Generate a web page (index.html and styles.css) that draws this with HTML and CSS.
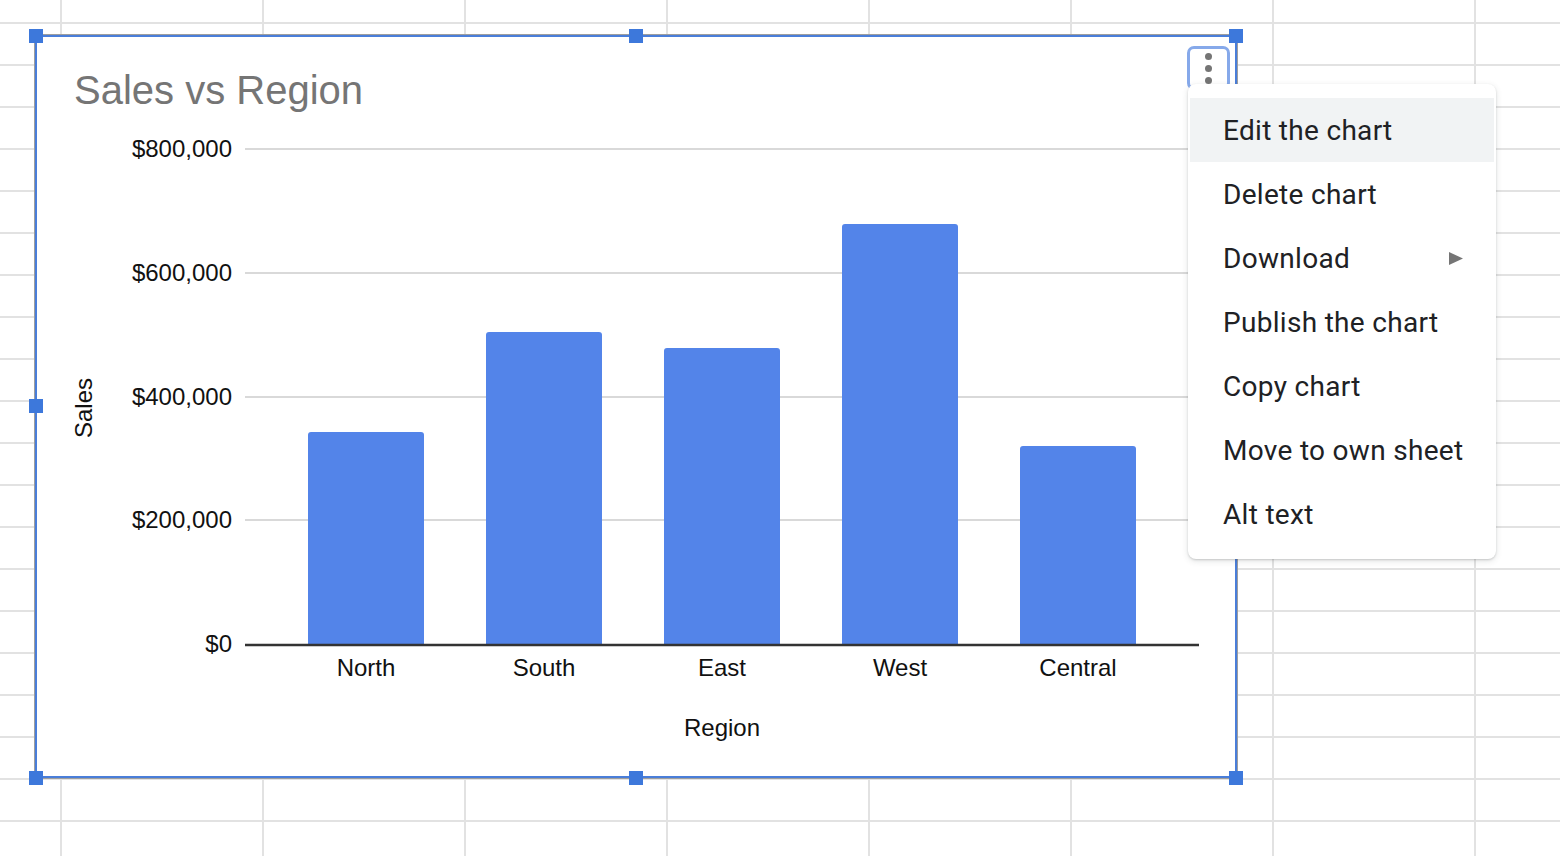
FILE: index.html
```html
<!DOCTYPE html>
<html>
  <head>
    <meta charset="UTF-8">
    <meta name="viewport" content="width=device-width, initial-scale=1.0"/>
    <title>Sales vs Region</title>
    <link rel="stylesheet" href="styles.css">
  </head>
  <body>
    <div class="sheet">
      <div class="chart">
        <svg class="plot" width="1198" height="739" viewBox="0 0 1198 739">
          <text class="chart-title" x="37" y="67">Sales vs Region</text>

          <g class="gridlines">
            <line x1="208" y1="112" x2="1161" y2="112"/>
            <line x1="208" y1="236" x2="1161" y2="236"/>
            <line x1="208" y1="360" x2="1161" y2="360"/>
            <line x1="208" y1="483" x2="1161" y2="483"/>
          </g>

          <g class="y-labels">
            <text x="195" y="120">$800,000</text>
            <text x="195" y="244">$600,000</text>
            <text x="195" y="368">$400,000</text>
            <text x="195" y="491">$200,000</text>
            <text x="195" y="615">$0</text>
          </g>

          <g class="bars">
            <path d="M271 608 V398 Q271 395 274 395 H384 Q387 395 387 398 V608 Z"/>
            <path d="M449 608 V298 Q449 295 452 295 H562 Q565 295 565 298 V608 Z"/>
            <path d="M627 608 V314 Q627 311 630 311 H740 Q743 311 743 314 V608 Z"/>
            <path d="M805 608 V190 Q805 187 808 187 H918 Q921 187 921 190 V608 Z"/>
            <path d="M983 608 V412 Q983 409 986 409 H1096 Q1099 409 1099 412 V608 Z"/>
          </g>

          <line class="baseline" x1="208" y1="608" x2="1162" y2="608"/>

          <g class="x-labels">
            <text x="329" y="639">North</text>
            <text x="507" y="639">South</text>
            <text x="685" y="639">East</text>
            <text x="863" y="639">West</text>
            <text x="1041" y="639">Central</text>
          </g>

          <text class="axis-title" x="685" y="699">Region</text>
          <text class="axis-title" transform="translate(55 371) rotate(-90)">Sales</text>
        </svg>

        <button class="chart-menu-btn" aria-label="Chart options">
          <span class="dot"></span>
          <span class="dot"></span>
          <span class="dot"></span>
        </button>

        <span class="handle h-tl"></span>
        <span class="handle h-tc"></span>
        <span class="handle h-tr"></span>
        <span class="handle h-ml"></span>
        <span class="handle h-mr"></span>
        <span class="handle h-bl"></span>
        <span class="handle h-bc"></span>
        <span class="handle h-br"></span>
      </div>

      <ul class="menu">
        <li class="menu-item active">Edit the chart</li>
        <li class="menu-item">Delete chart</li>
        <li class="menu-item">
          Download
          <svg class="submenu-arrow" width="14" height="13" viewBox="0 0 14 13"><polygon points="0,0 14,6.5 0,13"/></svg>
        </li>
        <li class="menu-item">Publish the chart</li>
        <li class="menu-item">Copy chart</li>
        <li class="menu-item">Move to own sheet</li>
        <li class="menu-item">Alt text</li>
      </ul>
    </div>
  </body>
</html>
```

FILE: styles.css
```css
*
{
  box-sizing: border-box;
}

body
{
  margin: 0;
  background-color: #ffffff;
  background-image:
    linear-gradient(to right, #e2e2e2 2px, transparent 2px),
    linear-gradient(to bottom, #e2e2e2 2px, transparent 2px);
  background-size: 202px 42px;
  background-position: 60px 22px;
  font-family: "Liberation Sans", Arial, sans-serif;
}

.sheet
{
  position: relative;
  width: 1560px;
  height: 856px;
  overflow: hidden;
}

/* chart object floating on the sheet */
.chart
{
  position: absolute;
  left: 35px;
  top: 35px;
  width: 1202px;
  height: 743px;
  background: #ffffff;
  border: 2px solid #4a7ed9;
  box-shadow: 0 0 0 1px #9e9e9e;
}

.plot
{
  display: block;
}

.chart-title
{
  font-size: 40px;
  fill: #757575;
}

.gridlines line
{
  stroke: #cccccc;
  stroke-width: 1.5;
}

.baseline
{
  stroke: #333333;
  stroke-width: 2.5;
}

.bars path
{
  fill: #5384e9;
}

.y-labels text,
.x-labels text,
.axis-title
{
  font-size: 24px;
  fill: #111111;
}

.y-labels text
{
  text-anchor: end;
}

.x-labels text,
.axis-title
{
  text-anchor: middle;
}

.chart-menu-btn
{
  position: absolute;
  left: 1150px;
  top: 9px;
  width: 43px;
  height: 44px;
  padding: 4px 0 0;
  display: flex;
  flex-direction: column;
  align-items: center;
  gap: 5px;
  background: #ffffff;
  border: 3px solid #86a9ea;
  border-radius: 7px;
}

.dot
{
  width: 7px;
  height: 7px;
  border-radius: 50%;
  background: #757575;
}

/* resize handles */
.handle
{
  position: absolute;
  width: 14px;
  height: 14px;
  background: #3d78db;
}

.h-tl { left: -8px; top: -8px; }
.h-tc { left: 592px; top: -8px; }
.h-tr { left: 1192px; top: -8px; }
.h-ml { left: -8px; top: 362px; }
.h-mr { left: 1192px; top: 362px; }
.h-bl { left: -8px; top: 734px; }
.h-bc { left: 592px; top: 734px; }
.h-br { left: 1192px; top: 734px; }

/* context menu */
.menu
{
  position: absolute;
  left: 1188px;
  top: 84px;
  width: 308px;
  margin: 0;
  padding: 14px 2px 13px;
  list-style: none;
  background: #ffffff;
  border-radius: 8px;
  box-shadow: 0 2px 6px rgba(60, 64, 67, 0.15), 0 1px 2px rgba(60, 64, 67, 0.2);
  font-family: Roboto, "Noto Sans", sans-serif;
  font-size: 28px;
  letter-spacing: 0.3px;
  color: #202124;
}

.menu-item
{
  display: flex;
  align-items: center;
  justify-content: space-between;
  height: 64px;
  padding: 0 31px 0 33px;
  white-space: nowrap;
}

.menu-item.active
{
  background: #f1f3f4;
}

.submenu-arrow
{
  fill: #757575;
}
```
